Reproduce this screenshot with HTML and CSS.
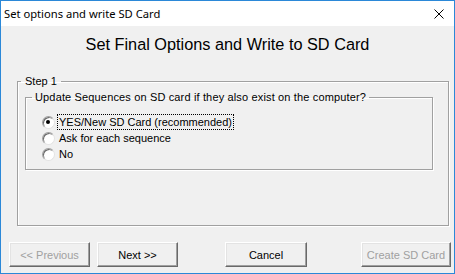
FILE: index.html
```html
<!DOCTYPE html>
<html lang="en">
<head>
  <meta charset="UTF-8" />
  <title>Set options and write SD Card</title>
  <link rel="stylesheet" href="styles.css">
</head>
<body>
  <div class="window">
    <div class="titlebar">
      <span class="title">Set options and write SD Card</span>
      <svg class="close" width="10" height="10" viewBox="0 0 10 10">
        <path d="M0.5 0.5 L9.5 9.5 M9.5 0.5 L0.5 9.5" stroke="#000" stroke-width="1" fill="none"/>
      </svg>
    </div>

    <div class="client">
      <h1 class="heading">Set Final Options and Write to SD Card</h1>

      <!-- Step 1 -->
      <fieldset class="group step">
        <legend>Step 1</legend>
        <fieldset class="group update">
          <legend>Update Sequences on SD card if they also exist on the computer?</legend>
          <div class="radio">
            <span class="dot checked"></span>
            <span class="label focus">YES/New SD Card (recommended)</span>
          </div>
          <div class="radio">
            <span class="dot"></span>
            <span class="label">Ask for each sequence</span>
          </div>
          <div class="radio">
            <span class="dot"></span>
            <span class="label">No</span>
          </div>
        </fieldset>
      </fieldset>

      <div class="buttons">
        <button class="btn btn-prev" disabled>&lt;&lt; Previous</button>
        <button class="btn btn-next">Next &gt;&gt;</button>
        <button class="btn btn-cancel">Cancel</button>
        <button class="btn btn-create" disabled>Create SD Card</button>
      </div>
    </div>
  </div>
</body>
</html>
```

FILE: styles.css
```css
html, body {
  margin: 0;
  padding: 0;
  background: #f0f0f0;
}
.window {
  width: 455px;
  height: 274px;
  box-sizing: border-box;
  border: 1px solid #2b88d8;
  background: #f0f0f0;
  display: flex;
  flex-direction: column;
  font-family: "Liberation Sans", Arial, sans-serif;
  font-size: 11px;
  color: #000;
}
.titlebar {
  height: 25px;
  background: #fff;
  display: flex;
  align-items: center;
  justify-content: space-between;
  padding: 0 10px 0 3px;
}
.title {
  font-family: "Noto Sans", sans-serif;
  font-size: 11.2px;
  line-height: 16px;
}
.close {
  display: block;
  margin-top: 1px;
}
.client {
  flex: 1;
  display: flex;
  flex-direction: column;
}
.heading {
  margin: 9px 0 22px;
  font-size: 16.3px;
  line-height: 18px;
  font-weight: normal;
  text-align: center;
}
.group {
  margin: 0;
  border: 1px solid #a0a0a0;
  box-shadow: 1px 1px 0 #fff, inset 1px 1px 0 #fff;
  min-width: 0;
}
.group legend {
  line-height: 13px;
  padding: 0 3px;
}
.step {
  margin-left: 16px;
  width: 432px;
  box-sizing: border-box;
  padding: 3px 7px 55px;
}
.step > legend {
  margin-left: -4px;
  padding: 0 4px;
}
.update {
  width: 408px;
  box-sizing: border-box;
  padding: 10px 0 7px 16px;
}
.update > legend {
  margin-left: -10px;
  letter-spacing: 0.15px;
}
.radio {
  display: flex;
  align-items: center;
  height: 16px;
}
.dot {
  width: 13px;
  height: 13px;
  box-sizing: border-box;
  border-radius: 50%;
  border: 1px solid;
  border-color: #a0a0a0 #e3e3e3 #e3e3e3 #a0a0a0;
  box-shadow: inset 1px 1px 0 #696969;
  background: #fff;
  position: relative;
}
.dot.checked::after {
  content: "";
  position: absolute;
  left: 3px;
  top: 3px;
  width: 4px;
  height: 4px;
  border-radius: 50%;
  background: #000;
}
.label {
  margin-left: 2px;
  padding: 0 1px;
  line-height: 14px;
  border: 1px solid transparent;
}
.label.focus {
  border: 1px dotted #000;
}
.buttons {
  display: flex;
  margin-top: 16px;
  padding-left: 8px;
}
.btn {
  height: 25px;
  box-sizing: border-box;
  font-family: inherit;
  font-size: 11px;
  color: #000;
  background: #f0f0f0;
  border: 1px solid;
  border-color: #fff #696969 #696969 #fff;
  box-shadow: inset -1px -1px 0 #a0a0a0, inset 1px 1px 0 #e3e3e3;
  padding: 0;
}
.btn:disabled {
  color: #a0a0a0;
}
.btn-prev { width: 81px; }
.btn-next { width: 81px; margin-left: 7px; }
.btn-cancel { width: 82px; margin-left: 47px; }
.btn-create { width: 90px; margin-left: 54px; }
```
